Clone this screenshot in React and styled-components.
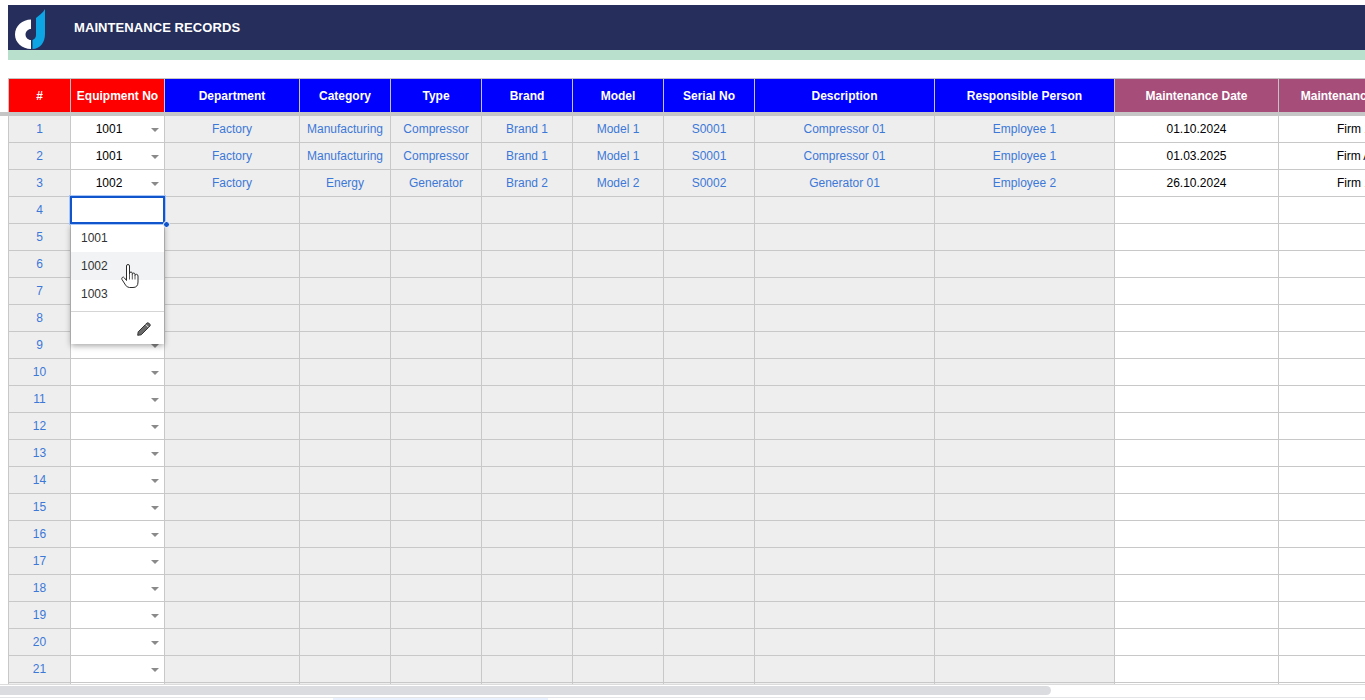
import React from 'react';
import styled, { createGlobalStyle } from 'styled-components';

const GlobalStyle = createGlobalStyle`
  html, body {
    margin: 0;
    padding: 0;
    height: 100%;
    background: #fff;
    overflow: hidden;
  }
  body {
    font-family: "Liberation Sans", Arial, sans-serif;
  }
`;

const COLUMNS = '62px 94px 135px 91px 91px 91px 91px 91px 180px 180px 164px 151px';

const Page = styled.div`
  width: 1365px;
  height: 700px;
  overflow: hidden;
  display: flex;
  flex-direction: column;
  padding-top: 5px;
  box-sizing: border-box;
`;

const TitleBar = styled.div`
  margin-left: 8px;
  height: 45px;
  flex: none;
  background: #262e5c;
  display: flex;
  align-items: center;
  gap: 28px;
  padding-left: 7px;
`;

const LogoMark = styled.svg`
  margin-top: 3px;
  flex: none;
`;

const Title = styled.h1`
  margin: 0 0 1px;
  font-size: 13px;
  letter-spacing: 0.08px;
  font-weight: 700;
  color: #fff;
`;

const MintStrip = styled.div`
  margin-left: 8px;
  height: 10px;
  flex: none;
  background: #b9e0cd;
  margin-bottom: 18px;
`;

const HeaderRow = styled.div`
  display: grid;
  grid-template-columns: ${COLUMNS};
  margin-left: 8px;
  height: 34px;
  flex: none;
  border-top: 1px solid #c4c4c4;
  box-sizing: border-box;
`;

const headColors = { red: '#ff0000', blue: '#0000ff', plum: '#a64d79' };

const HeadCell = styled.div`
  background: ${(p) => headColors[p.$tone]};
  color: #fff;
  font-size: 12px;
  font-weight: 700;
  white-space: nowrap;
  display: flex;
  align-items: center;
  justify-content: center;
  border-left: 1px solid #c4c4c4;
  box-sizing: border-box;
`;

const FreezeBar = styled.div`
  height: 4px;
  flex: none;
  background: #c6c6c6;
`;

const Body = styled.div`
  position: relative;
  margin-left: 8px;
  height: 568px;
  flex: none;
  overflow: hidden;
`;

const Row = styled.div`
  display: grid;
  grid-template-columns: ${COLUMNS};
  height: 27px;
`;

const Cell = styled.div`
  position: relative;
  box-sizing: border-box;
  font-size: 12px;
  white-space: nowrap;
  display: flex;
  align-items: center;
  justify-content: center;
  border-left: 1px solid #c8c8c8;
  border-bottom: 1px solid #c8c8c8;
  background: ${(p) => (p.$locked ? '#eeeeee' : '#ffffff')};
  color: ${(p) => (p.$locked ? '#3c78d8' : '#000000')};
  padding-right: ${(p) => (p.$picker ? '17px' : '0')};
`;

const Arrow = styled.span`
  position: absolute;
  right: 5px;
  top: 12px;
  width: 0;
  height: 0;
  border-left: 4px solid transparent;
  border-right: 4px solid transparent;
  border-top: 4px solid #8a8a8a;
`;

const ActiveCell = styled.div`
  position: absolute;
  left: 62px;
  top: 80px;
  width: 95px;
  height: 28px;
  box-sizing: border-box;
  background: #fff;
  border: 2px solid #1155cc;
  outline: 1px solid #a9c6f5;
  z-index: 3;
`;

const Handle = styled.span`
  position: absolute;
  right: -7px;
  bottom: -6px;
  width: 5px;
  height: 5px;
  border-radius: 50%;
  background: #1155cc;
  border: 1px solid #fff;
`;

const Menu = styled.div`
  position: absolute;
  left: 63px;
  top: 108px;
  width: 93px;
  height: 120px;
  box-sizing: border-box;
  background: #fff;
  box-shadow: 0 2px 6px rgba(0, 0, 0, 0.35);
  z-index: 2;
  display: flex;
  flex-direction: column;
`;

const MenuItem = styled.div`
  height: 28px;
  flex: none;
  padding-left: 10px;
  display: flex;
  align-items: center;
  font-size: 12px;
  color: #333;
  background: ${(p) => (p.$hover ? '#f1f3f4' : 'transparent')};
`;

const MenuFooter = styled.div`
  margin-top: 3px;
  flex: 1;
  border-top: 1px solid #d5d5d5;
  display: flex;
  align-items: center;
  justify-content: flex-end;
  padding: 2px 13px 0 0;
`;

const HandCursor = styled.svg`
  position: absolute;
  left: 113px;
  top: 148px;
  z-index: 4;
`;

const ScrollArea = styled.div`
  position: relative;
  height: 14px;
  flex: none;
  border-top: 1px solid #dcdcdc;
  border-bottom: 1px solid #e3e5e6;
  box-sizing: border-box;
`;

const Thumb = styled.div`
  position: absolute;
  left: 0;
  top: 1px;
  width: 1051px;
  height: 9px;
  border-radius: 0 5px 5px 0;
  background: #dadce0;
`;

const SheetTab = styled.div`
  height: 3px;
  flex: none;
  margin-left: 333px;
  width: 215px;
  background: #e8f0fe;
`;

const columns = [
  { title: '#', tone: 'red' },
  { title: 'Equipment No', tone: 'red' },
  { title: 'Department', tone: 'blue' },
  { title: 'Category', tone: 'blue' },
  { title: 'Type', tone: 'blue' },
  { title: 'Brand', tone: 'blue' },
  { title: 'Model', tone: 'blue' },
  { title: 'Serial No', tone: 'blue' },
  { title: 'Description', tone: 'blue' },
  { title: 'Responsible Person', tone: 'blue' },
  { title: 'Maintenance Date', tone: 'plum' },
  { title: 'Maintenance Team', tone: 'plum' },
];

const records = [
  ['1001', 'Factory', 'Manufacturing', 'Compressor', 'Brand 1', 'Model 1', 'S0001', 'Compressor 01', 'Employee 1', '01.10.2024', 'Firm 1'],
  ['1001', 'Factory', 'Manufacturing', 'Compressor', 'Brand 1', 'Model 1', 'S0001', 'Compressor 01', 'Employee 1', '01.03.2025', 'Firm A'],
  ['1002', 'Factory', 'Energy', 'Generator', 'Brand 2', 'Model 2', 'S0002', 'Generator 01', 'Employee 2', '26.10.2024', 'Firm 1'],
];

const rows = Array.from({ length: 22 }, (_, i) => records[i] || Array(11).fill(''));

const Logo = () => (
  <LogoMark width="31" height="41" viewBox="0 0 31 41">
    <path d="M16 10.500C7.500 10.500 0 17 0 25.500C0 33.500 7 40 16 40L16 31C13 31 10.500 28.500 10.500 25.500C10.500 22.500 13 20 16 20Z" fill="#fff" />
    <path d="M21 9C24 6.500 28 4 30 0L30 25C30 33.500 25 40 17.500 40L17.500 31C19.500 30.500 21 28.500 21 26Z" fill="#0ea5e4" />
  </LogoMark>
);

const Pencil = () => (
  <svg width="14" height="14" viewBox="0 0 14 14">
    <path d="M.7 13.300L1.200 9.800L9.800 1.200Q10.800.3 11.800 1.200L12.800 2.200Q13.700 3.200 12.800 4.200L4.200 12.800Z" fill="#6a6a6a" stroke="#333" strokeWidth="1" />
    <path d="M8.800 2.600L11.400 5.200" stroke="#fff" strokeWidth=".8" />
  </svg>
);

const App = () => (
  <Page>
    <GlobalStyle />
    <TitleBar>
      <Logo />
      <Title>MAINTENANCE RECORDS</Title>
    </TitleBar>
    <MintStrip />
    <HeaderRow>
      {columns.map((c) => (
        <HeadCell key={c.title} $tone={c.tone}>{c.title}</HeadCell>
      ))}
    </HeaderRow>
    <FreezeBar />
    <Body>
      {rows.map((row, i) => (
        <Row key={i}>
          <Cell $locked>{i < 21 ? i + 1 : ''}</Cell>
          <Cell $picker>
            {row[0]}
            <Arrow />
          </Cell>
          {row.slice(1, 9).map((text, j) => (
            <Cell key={j} $locked>{text}</Cell>
          ))}
          <Cell>{row[9]}</Cell>
          <Cell>{row[10]}</Cell>
        </Row>
      ))}
      <ActiveCell>
        <Handle />
      </ActiveCell>
      <Menu>
        <MenuItem>1001</MenuItem>
        <MenuItem $hover>1002</MenuItem>
        <MenuItem>1003</MenuItem>
        <MenuFooter>
          <Pencil />
        </MenuFooter>
      </Menu>
      <HandCursor width="18" height="24" viewBox="0 0 18 24">
        <path d="M5.500 14V2Q5.500.5 7 .5T8.500 2V10V9.500Q8.700 8 10 8T11.300 9.500V10.500Q11.500 9 12.700 9T14 10.500V11.500Q14.200 10.300 15.500 10.300T17 12V18Q17 23.500 12 23.500H8.500Q6 23.500 4.500 21L1 15.500Q.3 14 1.500 13.300T3.500 14L5.500 16.500Z" fill="#fff" stroke="#2b2b2b" strokeWidth="1" />
        <path d="M8.500 10V15.500M11.300 10.500V15.500M14 11.500V15.500" stroke="#2b2b2b" strokeWidth=".8" fill="none" />
      </HandCursor>
    </Body>
    <ScrollArea>
      <Thumb />
    </ScrollArea>
    <SheetTab />
  </Page>
);

export default App;
